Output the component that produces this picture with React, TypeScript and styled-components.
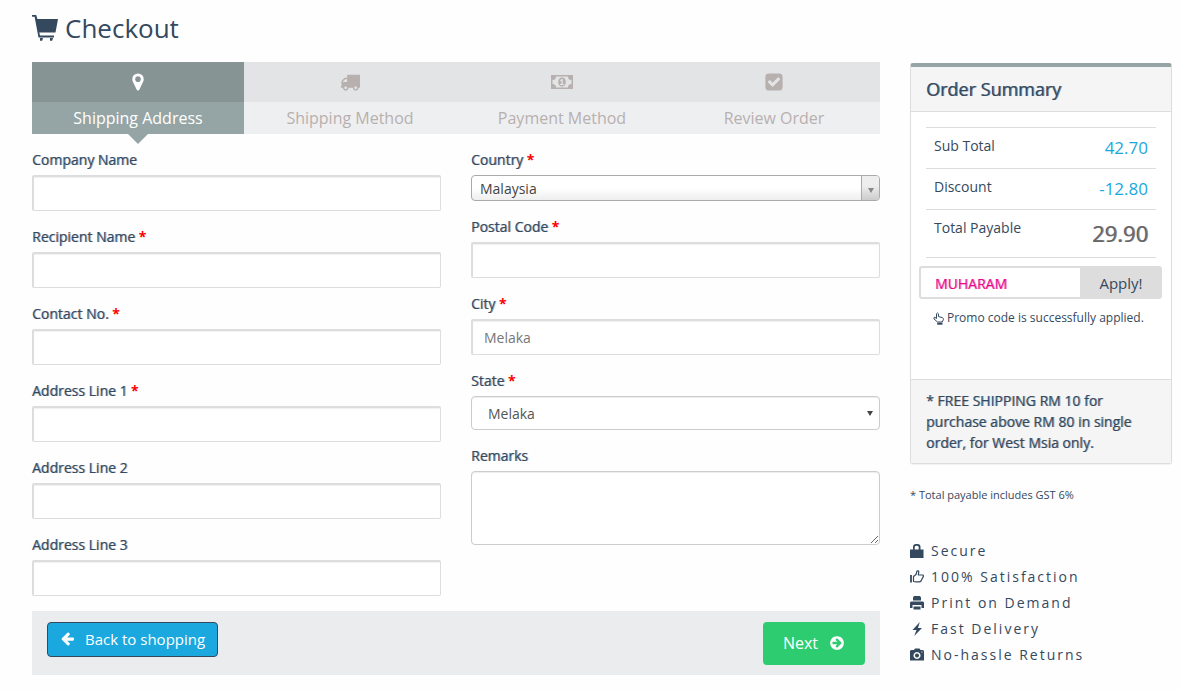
import React from "react";
import styled, { createGlobalStyle, css } from "styled-components";

const ink = "#34495e";
const line = "#dddddd";

const GlobalStyle = createGlobalStyle`
  *, *::before, *::after { box-sizing: border-box; }
  body {
    margin: 0;
    background: #fefefe;
    color: ${ink};
    font-family: "Open Sans", "Liberation Sans", sans-serif;
    font-size: 14px;
    line-height: 20px;
  }
  button, input, select, textarea { font-family: inherit; margin: 0; }
`;

/* Thickens the strokes of the regular face without changing its widths. */
const emphasis = (shade: string) => css`
  text-shadow: 1px 0 0 ${shade};
`;

const Page = styled.div`
  display: grid;
  grid-template-columns: minmax(0, 1fr) 262px;
  column-gap: 30px;
  padding: 12px 9px 12px 32px;
`;

const Title = styled.h1`
  grid-column: 1 / -1;
  display: flex;
  align-items: center;
  gap: 7px;
  height: 34px;
  margin: 0 0 16px;
  padding-bottom: 2px;
  font-size: 26px;
  line-height: 32px;
  font-weight: 400;
`;

const Steps = styled.ol`
  display: grid;
  grid-template-columns: repeat(4, 1fr);
  margin: 0;
  padding: 0;
  list-style: none;
`;

const Step = styled.li<{ $active?: boolean }>`
  position: relative;
  color: ${(p) => (p.$active ? "#ffffff" : "#b8afaf")};
  background: ${(p) => (p.$active ? "#95a5a5" : "#eeeff1")};
  font-size: 16px;
  line-height: 32px;
  text-align: center;
  ${(p) =>
    p.$active &&
    `&::after {
      content: "";
      position: absolute;
      top: 100%;
      left: 50%;
      margin-left: -10px;
      border: 10px solid transparent;
      border-top-color: #95a5a5;
      border-bottom: 0;
    }`}
`;

const StepIcon = styled.div<{ $active?: boolean }>`
  display: flex;
  align-items: center;
  justify-content: center;
  height: 40px;
  background: ${(p) => (p.$active ? "#869494" : "#e2e4e5")};
`;

const Form = styled.form`
  margin: 0;
`;

const Columns = styled.div`
  display: grid;
  grid-template-columns: 1fr 1fr;
  column-gap: 30px;
  padding: 16px 0 15px;
`;

const Column = styled.div`
  display: flex;
  flex-direction: column;
  gap: 16px;
`;

const Field = styled.div`
  display: flex;
  flex-direction: column;
  gap: 5px;
`;

const Label = styled.label`
  font-size: 14px;
  line-height: 20px;
  ${emphasis("rgba(52, 73, 94, 0.5)")}
`;

const Required = styled.span`
  color: #ff0000;
  font-weight: 700;
  text-shadow: none;
`;

const TextInput = styled.input`
  width: 100%;
  height: 36px;
  padding: 2px 11px;
  border: 1px solid ${line};
  border-width: 2px 1px 1px 2px;
  border-radius: 2px;
  background: #ffffff;
  box-shadow: inset 0 1px 1px rgba(0, 0, 0, 0.06);
  color: #777777;
  font-size: 14px;
  outline: none;
`;

const SelectBox = styled.div`
  position: relative;
  display: flex;
`;

const CountrySelect = styled.select`
  appearance: none;
  width: 100%;
  height: 26px;
  padding: 0 26px 0 8px;
  border: 1px solid #aaaaaa;
  border-radius: 4px;
  background: linear-gradient(#ffffff 50%, #eeeeee);
  color: #444444;
  font-size: 14px;
`;

const CountryArrow = styled.span`
  position: absolute;
  top: 1px;
  right: 1px;
  bottom: 1px;
  display: flex;
  align-items: center;
  justify-content: center;
  width: 18px;
  padding-top: 4px;
  border-left: 1px solid #aaaaaa;
  border-radius: 0 3px 3px 0;
  background: linear-gradient(#eeeeee 40%, #cccccc);
  pointer-events: none;
`;

const StateSelect = styled.select`
  appearance: none;
  width: 100%;
  height: 34px;
  padding: 0 26px 0 16px;
  border: 1px solid #cccccc;
  border-radius: 4px;
  background: #ffffff;
  box-shadow: inset 0 1px 1px rgba(0, 0, 0, 0.075);
  color: #555555;
  font-size: 14px;
`;

const StateArrow = styled.span`
  position: absolute;
  top: 0;
  right: 7px;
  bottom: 0;
  display: flex;
  align-items: center;
  pointer-events: none;
`;

const Remarks = styled.textarea`
  display: block;
  width: 100%;
  height: 74px;
  padding: 6px 12px;
  border: 1px solid #cccccc;
  border-radius: 4px;
  background: #ffffff;
  box-shadow: inset 0 1px 1px rgba(0, 0, 0, 0.075);
  font-size: 14px;
  resize: vertical;
`;

const Actions = styled.div`
  display: flex;
  align-items: flex-start;
  justify-content: space-between;
  min-height: 64px;
  padding: 11px 15px 10px;
  background: #ebecee;
`;

const BackButton = styled.button`
  display: flex;
  align-items: center;
  gap: 10px;
  height: 35px;
  padding: 0 12px 2px;
  border: 1px solid ${ink};
  border-radius: 4px;
  background: #1aa8de;
  color: #ffffff;
  font-size: 15px;
`;

const NextButton = styled.button`
  display: flex;
  align-items: center;
  gap: 11px;
  height: 43px;
  padding: 0 20px 2px;
  border: 0;
  border-radius: 4px;
  background: #2ecc71;
  color: #ffffff;
  font-size: 16px;
`;

const Panel = styled.section`
  margin-top: 1px;
  border: 1px solid ${line};
  border-top: 4px solid #95a5a5;
  border-radius: 3px;
  background: #ffffff;
  box-shadow: 0 1px 1px rgba(0, 0, 0, 0.05);
`;

const PanelHead = styled.h2`
  margin: 0;
  padding: 10px 15px;
  border-bottom: 1px solid ${line};
  background: #f5f5f5;
  font-size: 18px;
  line-height: 24px;
  font-weight: 400;
  ${emphasis("rgba(52, 73, 94, 0.6)")}
`;

const PanelBody = styled.div`
  min-height: 267px;
  padding: 15px 9px 15px 8px;
`;

const Totals = styled.table`
  width: calc(100% - 13px);
  margin: 0 6px 0 7px;
  border-collapse: collapse;
  border-bottom: 1px solid ${line};
`;

const TotalLabel = styled.th`
  padding: 8px;
  border-top: 1px solid ${line};
  font-weight: 400;
  text-align: left;
  vertical-align: top;
`;

const Amount = styled.td<{ $total?: boolean }>`
  padding: 8px;
  border-top: 1px solid ${line};
  color: ${(p) => (p.$total ? "#666666" : "#1aa8de")};
  font-size: ${(p) => (p.$total ? "22px" : "17px")};
  line-height: ${(p) => (p.$total ? "31px" : "24px")};
  text-align: right;
  ${(p) => p.$total && emphasis("rgba(102, 102, 102, 0.7)")}
`;

const Promo = styled.div`
  display: flex;
  height: 33px;
  margin-top: 8px;
`;

const PromoInput = styled.input`
  flex: 1;
  min-width: 0;
  padding: 2px 14px 0;
  border: 2px solid ${line};
  border-right: 0;
  border-radius: 3px 0 0 3px;
  background: #ffffff;
  color: #e6098c;
  font-size: 14px;
  outline: none;
  ${emphasis("rgba(230, 9, 140, 0.5)")}
`;

const ApplyButton = styled.button`
  width: 82px;
  padding: 0;
  border: 0;
  border-radius: 0 3px 3px 0;
  background: ${line};
  color: ${ink};
  font-size: 15px;
`;

const PromoNote = styled.p`
  display: flex;
  align-items: center;
  gap: 3px;
  margin: 9px 0 0 14px;
  font-size: 12px;
  line-height: 20px;
  white-space: nowrap;
`;

const PanelFoot = styled.div`
  padding: 10px 15px;
  border-top: 1px solid ${line};
  background: #f5f5f5;
  line-height: 21px;
  ${emphasis("rgba(52, 73, 94, 0.5)")}
`;

const TaxNote = styled.p`
  margin: 21px 0 0;
  font-size: 11px;
  line-height: 20px;
`;

const Perks = styled.ul`
  margin: 33px 0 0;
  padding: 0;
  list-style: none;
`;

const Perk = styled.li`
  display: flex;
  align-items: center;
  gap: 7px;
  height: 26px;
  letter-spacing: 2px;
`;

type IconProps = { d: string; w?: number; h?: number; box?: string };
const Icon = ({ d, w = 14, h = 14, box = "0 0 1792 1792" }: IconProps) => (
  <svg width={w} height={h} viewBox={box} fill="currentColor" fillRule="evenodd" aria-hidden="true">
    <path d={d} />
  </svg>
);

const paths = {
  cart: "M0 0h4.200l1.200 4H26l-2.500 13.500H7.300l.7 3H22v2H6.500L2.600 1.800H0zM8 23h3l-.8 2.800H8zM18 23h3l-.8 2.800H18z",
  pin: "M1152 640q0-106-75-181t-181-75-181 75-75 181 75 181 181 75 181-75 75-181zm256 0q0 109-33 179l-364 774q-16 33-47.500 52t-67.500 19-67.500-19-46.500-52l-365-774q-33-70-33-179 0-212 150-362t362-150 362 150 150 362z",
  truck:
    "M640 1408q0-52-38-90t-90-38-90 38-38 90 38 90 90 38 90-38 38-90zm-384-512h384v-256h-158q-13 0-22 9l-195 195q-9 9-9 22v30zm1280 512q0-52-38-90t-90-38-90 38-38 90 38 90 90 38 90-38 38-90zm256-1088v1024q0 15-4 26.500t-13.500 18.500-16.500 11.500-23.500 6-22.500 2-25.500 0-22.500-.5q0 106-75 181t-181 75-181-75-75-181h-384q0 106-75 181t-181 75-181-75-75-181h-64q-3 0-22.500.5t-25.500 0-22.500-2-23.500-6-16.500-11.500-13.500-18.500-4-26.500q0-26 19-45t45-19v-320q0-8-.5-35t0-38 2.500-34.500 6.500-37 14-30.500 22.500-30l198-198q19-19 50.500-32t58.500-13h160v-192q0-26 19-45t45-19h1024q26 0 45 19t19 45z",
  money:
    "M0 0h22v14H0zM5 1.500A3.500 3.500 0 0 1 1.500 5v4A3.500 3.500 0 0 1 5 12.500h12A3.500 3.500 0 0 1 20.500 9V5A3.500 3.500 0 0 1 17 1.500zM11 2.500c2.400 0 3.800 2 3.800 4.500s-1.400 4.500-3.800 4.500S7.200 9.500 7.200 7 8.600 2.500 11 2.500zM10.600 4L9 5.400l.7.8.7-.5V9H9v1h4V9h-1.300V4z",
  check:
    "M813 1299l614-614q19-19 19-45t-19-45l-102-102q-19-19-45-19t-45 19l-467 467-211-211q-19-19-45-19t-45 19l-102 102q-19 19-19 45t19 45l358 358q19 19 45 19t45-19zm851-883v960q0 119-84.500 203.500t-203.500 84.500h-960q-119 0-203.500-84.500t-84.500-203.500v-960q0-119 84.500-203.500t203.500-84.500h960q119 0 203.500 84.500t84.500 203.500z",
  left: "M1664 896v128q0 53-32.500 90.500t-84.500 37.500h-704l293 294q38 36 38 90t-38 90l-75 76q-37 37-90 37-52 0-91-37l-651-652q-37-37-37-90 0-52 37-91l651-650q38-38 91-38 52 0 90 38l75 74q38 38 38 91t-38 91l-293 293h704q52 0 84.500 37.500t32.500 90.500z",
  next: "M1413 896q0-27-18-45l-91-91-362-362q-18-18-45-18t-45 18l-91 91q-18 18-18 45t18 45l189 189h-502q-26 0-45 19t-19 45v128q0 26 19 45t45 19h502l-189 189q-19 19-19 45t19 45l91 91q18 18 45 18t45-18l362-362 91-91q18-18 18-45zm251 0q0 209-103 385.500t-279.500 279.500-385.500 103-385.500-103-279.500-279.500-103-385.500 103-385.500 279.500-279.500 385.500-103 385.500 103 279.500 279.500 103 385.500z",
  lock: "M0 5.500h3V3a3 3 0 0 1 3-3h1.500a3 3 0 0 1 3 3v2.500H13.500V14H0zM4.700 5.500h4V3.200a1.500 1.500 0 0 0-1.500-1.500H6.200a1.500 1.500 0 0 0-1.500 1.500z",
  print: "M4 0h6l1 1.500V4.500H3V1.500zM1 5.500h12l1 1V12h-2.500V9h-9v3H0V6.500zM3.500 10.500h7V13.500h-7z",
  bolt: "M9.800 0L2.500 8h4L4.200 14 12 6H8z",
  camera:
    "M1 2h3l1-1.500h4.500L10.500 2H13l1 1v9.500H0V3zM7 4a3.500 3.500 0 1 0 .01 0zM7 5.500a2 2 0 1 1-.01 0zM11.500 3.500h1v1h-1z",
};

const Thumb = () => (
  <svg width="14" height="14" viewBox="0 0 14 14" fill="none" stroke="currentColor" aria-hidden="true">
    <path d="M1 5v7.500" strokeWidth="1.800" />
    <path
      d="M3.500 11.500V6.500L6 4.500 7 1q1.500-.6 1.800.8L8.300 5h4.500q.9.6.5 1.600L11.500 10q-.6 1.800-2 1.800H6z"
      strokeWidth="1.200"
      strokeLinejoin="round"
    />
  </svg>
);

const Hand = () => (
  <svg width="11" height="13" viewBox="0 0 11 13" fill="none" stroke="currentColor" aria-hidden="true">
    <path
      d="M3.500 6.500V1.800q.9-1.600 1.900 0V4.500L9.500 5.700q1.200.5.900 1.800L9.300 10H4.500L1 6.900Q.3 5.300 1.900 5.300z"
      strokeLinejoin="round"
    />
    <path d="M4.200 11.700h5.300" strokeWidth="2" />
  </svg>
);

const Triangle = ({ color }: { color: string }) => (
  <svg width="6" height="5" viewBox="0 0 6 5" fill={color} aria-hidden="true">
    <path d="M0 0h6L3 5z" />
  </svg>
);

type FieldProps = { id: string; label: string; required?: boolean; value?: string };
const FieldLabel = ({ id, label, required }: FieldProps) => (
  <Label htmlFor={id}>
    {label}
    {required && <Required> *</Required>}
  </Label>
);
const TextField = (props: FieldProps) => (
  <Field>
    <FieldLabel {...props} />
    <TextInput id={props.id} type="text" defaultValue={props.value} />
  </Field>
);

export default function App() {
  return (
    <>
      <GlobalStyle />
      <Page>
        <Title>
          <Icon d={paths.cart} w={26} h={26} box="0 0 26 26" />
          Checkout
        </Title>
        <main>
          <Steps>
            <Step $active aria-current="step">
              <StepIcon $active>
                <Icon d={paths.pin} w={20} h={20} />
              </StepIcon>
              Shipping Address
            </Step>
            <Step>
              <StepIcon>
                <Icon d={paths.truck} w={20} h={20} />
              </StepIcon>
              Shipping Method
            </Step>
            <Step>
              <StepIcon>
                <Icon d={paths.money} w={22} h={14} box="0 0 22 14" />
              </StepIcon>
              Payment Method
            </Step>
            <Step>
              <StepIcon>
                <Icon d={paths.check} w={20} h={20} />
              </StepIcon>
              Review Order
            </Step>
          </Steps>
          <Form onSubmit={(e) => e.preventDefault()}>
            <Columns>
              <Column>
                <TextField id="company" label="Company Name" />
                <TextField id="recipient" label="Recipient Name" required />
                <TextField id="contact" label="Contact No." required />
                <TextField id="address1" label="Address Line 1" required />
                <TextField id="address2" label="Address Line 2" />
                <TextField id="address3" label="Address Line 3" />
              </Column>
              <Column>
                <Field>
                  <FieldLabel id="country" label="Country" required />
                  <SelectBox>
                    <CountrySelect id="country">
                      <option>Malaysia</option>
                    </CountrySelect>
                    <CountryArrow>
                      <Triangle color="#888888" />
                    </CountryArrow>
                  </SelectBox>
                </Field>
                <TextField id="postal" label="Postal Code" required />
                <TextField id="city" label="City" required value="Melaka" />
                <Field>
                  <FieldLabel id="state" label="State" required />
                  <SelectBox>
                    <StateSelect id="state">
                      <option>Melaka</option>
                    </StateSelect>
                    <StateArrow>
                      <Triangle color="#444444" />
                    </StateArrow>
                  </SelectBox>
                </Field>
                <Field>
                  <FieldLabel id="remarks" label="Remarks" />
                  <Remarks id="remarks" />
                </Field>
              </Column>
            </Columns>
            <Actions>
              <BackButton type="button">
                <Icon d={paths.left} w={15} h={15} />
                Back to shopping
              </BackButton>
              <NextButton type="submit">
                Next
                <Icon d={paths.next} w={16} h={16} />
              </NextButton>
            </Actions>
          </Form>
        </main>
        <aside>
          <Panel>
            <PanelHead>Order Summary</PanelHead>
            <PanelBody>
              <Totals>
                <tbody>
                  <tr>
                    <TotalLabel scope="row">Sub Total</TotalLabel>
                    <Amount>42.70</Amount>
                  </tr>
                  <tr>
                    <TotalLabel scope="row">Discount</TotalLabel>
                    <Amount>-12.80</Amount>
                  </tr>
                  <tr>
                    <TotalLabel scope="row">Total Payable</TotalLabel>
                    <Amount $total>29.90</Amount>
                  </tr>
                </tbody>
              </Totals>
              <Promo>
                <PromoInput aria-label="Promo code" defaultValue="MUHARAM" />
                <ApplyButton type="button">Apply!</ApplyButton>
              </Promo>
              <PromoNote>
                <Hand />
                Promo code is successfully applied.
              </PromoNote>
            </PanelBody>
            <PanelFoot>* FREE SHIPPING RM 10 for purchase above RM 80 in single order, for West Msia only.</PanelFoot>
          </Panel>
          <TaxNote>* Total payable includes GST 6%</TaxNote>
          <Perks>
            <Perk>
              <Icon d={paths.lock} box="0 0 14 14" />
              Secure
            </Perk>
            <Perk>
              <Thumb />
              100% Satisfaction
            </Perk>
            <Perk>
              <Icon d={paths.print} box="0 0 14 14" />
              Print on Demand
            </Perk>
            <Perk>
              <Icon d={paths.bolt} box="0 0 14 14" />
              Fast Delivery
            </Perk>
            <Perk>
              <Icon d={paths.camera} box="0 0 14 14" />
              No-hassle Returns
            </Perk>
          </Perks>
        </aside>
      </Page>
    </>
  );
}
